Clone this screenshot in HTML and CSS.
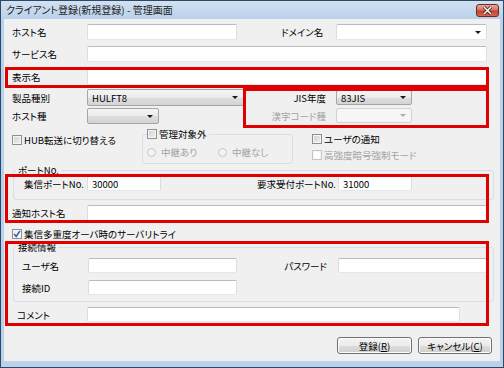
FILE: index.html
```html
<!DOCTYPE html>
<html lang="ja">
<head>
    <meta charset="UTF-8">
    <meta name="viewport" content="width=device-width, initial-scale=1.0">
    <title>クライアント登録(新規登録) - 管理画面</title>
    <link rel="stylesheet" href="styles.css">
</head>

<body>
    <div class="window">
        <div class="titlebar">
            <span class="title">クライアント登録(新規登録) - 管理画面</span>
            <span class="close">
                <svg width="11" height="9" viewBox="0 0 11 9"><path d="M2 1 L9 8 M9 1 L2 8" stroke="#3a1010" stroke-width="3"/><path d="M2 1 L9 8 M9 1 L2 8" stroke="#fff" stroke-width="1.6"/></svg>
            </span>
        </div>

        <div class="client">
            <div class="row r1">
                <span class="lbl">ホスト名</span>
                <span class="edit w150"></span>
                <span class="lbl dom">ドメイン名</span>
                <span class="combo edit-combo w151"><i class="arrow"></i></span>
            </div>
            <div class="row r2">
                <span class="lbl">サービス名</span>
                <span class="edit w400"></span>
            </div>
            <div class="row r3">
                <span class="lbl">表示名</span>
                <span class="edit w400"></span>
            </div>

            <div class="product">
                <div class="prod-left">
                    <div class="row kind"><span class="lbl">製品種別</span><span class="combo w157">HULFT8<i class="arrow"></i></span></div>
                    <div class="row host-kind"><span class="lbl">ホスト種</span><span class="combo w72"><i class="arrow"></i></span></div>
                </div>
                <div class="prod-right">
                    <div class="row jis"><span class="rlbl">JIS年度</span><span class="combo w76">83JIS<i class="arrow"></i></span></div>
                    <div class="row kanji"><span class="rlbl off">漢字コード種</span><span class="combo w76 disabled"><i class="arrow"></i></span></div>
                </div>
            </div>

            <div class="options">
                <span class="check hub"><i class="cb"></i>HUB転送に切り替える</span>
                <fieldset class="relay">
                    <legend><span class="check"><i class="cb"></i>管理対象外</span></legend>
                    <div class="radios">
                        <span class="radio off first"><i class="rb"></i>中継あり</span>
                        <span class="radio off"><i class="rb"></i>中継なし</span>
                    </div>
                </fieldset>
                <div class="notify">
                    <span class="check"><i class="cb"></i>ユーザの通知</span>
                    <span class="check off strong"><i class="cb"></i>高強度暗号強制モード</span>
                </div>
            </div>

            <fieldset class="group port">
                <legend>ポートNo.</legend>
                <div class="row port-row">
                    <span class="lbl p1">集信ポートNo.</span>
                    <span class="edit w74">30000</span>
                    <span class="lbl p2">要求受付ポートNo.</span>
                    <span class="edit w74">31000</span>
                </div>
            </fieldset>

            <div class="row notice">
                <span class="lbl">通知ホスト名</span>
                <span class="edit w400"></span>
            </div>

            <div class="row retry">
                <span class="check"><i class="cb checked"><svg width="8" height="8" viewBox="0 0 8 8"><path d="M1 4 L3.2 6.5 L7 0.8" fill="none" stroke="#2b5ea8" stroke-width="1.5"/></svg></i>集信多重度オーバ時のサーバリトライ</span>
            </div>

            <fieldset class="group conn">
                <legend>接続情報</legend>
                <div class="row conn-row">
                    <span class="lbl c1">ユーザ名</span>
                    <span class="edit w149"></span>
                    <span class="rlbl pw">パスワード</span>
                    <span class="edit w149"></span>
                </div>
                <div class="row conn-row second">
                    <span class="lbl c1">接続ID</span>
                    <span class="edit w149"></span>
                </div>
            </fieldset>

            <div class="row comment">
                <span class="lbl">コメント</span>
                <span class="edit w373"></span>
            </div>

            <div class="buttons">
                <span class="btn">登録(<u>R</u>)</span>
                <span class="btn cancel">キャンセル(<u>C</u>)</span>
            </div>
        </div>

        <div class="mark m1"></div>
        <div class="mark m2"></div>
        <div class="mark m3"></div>
        <div class="mark m4"></div>
    </div>
</body>

</html>
```

FILE: styles.css
```css
* {
    box-sizing: border-box;
}

body {
    margin: 0;
    font-family: "Noto Sans CJK JP", "Noto Sans", sans-serif;
    font-size: 9.5px;
    line-height: 12px;
    font-feature-settings: "palt";
    color: #000;
    background: #ffffff;
}

.window {
    position: relative;
    width: 504px;
    height: 368px;
    border: 1px solid #2c4a66;
    background: #b9d1ea;
    display: flex;
    flex-direction: column;
}

.titlebar {
    height: 18px;
    display: flex;
    align-items: center;
    padding: 0 4px 0 5px;
    background: linear-gradient(#d2e1f1, #b9d1ea);
    font-size: 10px;
}

.title {
    flex: 1;
    color: #1e1e1e;
}

.close {
    width: 23px;
    height: 13px;
    border: 1px solid #6b2a22;
    border-radius: 3px;
    background: linear-gradient(#eaa899, #d37461 45%, #c2432c 55%, #d06a50);
    display: flex;
    align-items: center;
    justify-content: center;
}

.client {
    margin: 0 3px;
    height: 342px;
    background: #f0f0f0;
}

/* rows */
.row {
    display: flex;
    align-items: center;
    height: 16px;
    padding-left: 8px;
}

.lbl {
    width: 75px;
    flex: none;
    white-space: nowrap;
}

.rlbl {
    flex: none;
    white-space: nowrap;
    text-align: right;
}

.r1 { margin-top: 5px; }
.r2 { margin-top: 6px; }
.r3 { margin-top: 7px; }

.dom {
    width: 55px;
    margin-left: 44px;
}

/* controls */
.edit {
    height: 100%;
    flex: none;
    display: flex;
    align-items: center;
    padding-left: 4px;
    background: #fff;
    border: 1px solid;
    border-color: #b8bbc1 #dadde3 #e4e6ea #dadde3;
    border-radius: 2px;
}

.combo {
    height: 100%;
    flex: none;
    display: flex;
    align-items: center;
    padding: 0 5px 0 4px;
    border: 1px solid #a5a5a5;
    border-radius: 2px;
    background: linear-gradient(#f5f5f5, #ebebeb 50%, #dedede 51%, #d4d4d4);
}

.combo .arrow {
    margin-left: auto;
}

.arrow {
    width: 0;
    height: 0;
    border-left: 3px solid transparent;
    border-right: 3px solid transparent;
    border-top: 3px solid #1a1a1a;
}

.edit-combo {
    background: #fff;
    border-color: #b8bbc1 #dadde3 #e4e6ea #dadde3;
}

.combo.disabled {
    background: #f6f6f6;
    border-color: #d3d3d3;
}

.combo.disabled .arrow {
    border-top-color: #aeaeae;
}

.w72 { width: 72px; }
.w74 { width: 74px; }
.w76 { width: 76px; }
.w149 { width: 149px; }
.w150 { width: 150px; }
.w151 { width: 151px; }
.w157 { width: 157px; }
.w373 { width: 373px; }
.w400 { width: 400px; }

.off {
    color: #a3a3a3;
}

/* product block */
.product {
    display: flex;
    margin-top: 4px;
}

.prod-left {
    width: 240px;
}

.kind {
    height: 17px;
}

.host-kind {
    margin-top: 2px;
}

.prod-right .row {
    height: 15px;
    padding-left: 0;
}

.prod-right .rlbl {
    width: 82px;
    margin-right: 10px;
}

.jis { margin-top: 1px; }
.kanji { margin-top: 3px; }

/* check boxes and radios */
.check,
.radio {
    display: flex;
    align-items: center;
    gap: 2px;
    height: 12px;
    white-space: nowrap;
}

.cb {
    width: 10px;
    height: 10px;
    flex: none;
    border: 1px solid #8e8f8f;
    background: linear-gradient(135deg, #cfcfcf, #f2f2f2);
    box-shadow: inset 0 0 0 1px #f6f6f6;
    display: flex;
    align-items: center;
    justify-content: center;
}

.cb.checked {
    background: linear-gradient(135deg, #e8e8e8, #ffffff);
}

.off .cb {
    border-color: #c6c6c6;
    background: #fff;
}

.rb {
    width: 9px;
    height: 9px;
    flex: none;
    border-radius: 50%;
    border: 1px solid #c6c6c6;
    background: #f3f3f3;
    margin-right: 3px;
}

.options {
    display: flex;
    align-items: flex-start;
    margin-top: 4px;
    height: 36px;
}

.hub {
    width: 130px;
    margin: 6px 0 0 8px;
}

.relay {
    width: 151px;
    height: 36px;
    margin: 0;
    padding: 0 0 0 4px;
    border: 1px solid #d5dfe5;
    border-radius: 3px;
    min-width: 0;
}

.relay legend {
    margin-left: 0;
    padding: 0 2px 0 0;
    height: 12px;
}

.radios {
    display: flex;
    margin-top: 6px;
}

.radio.first {
    width: 71px;
}

.notify {
    margin: 5px 0 0 19px;
}

.notify .strong {
    margin-top: 4px;
}

/* group boxes */
.group {
    width: 481px;
    margin: 0 0 0 9px;
    padding: 0;
    border: 1px solid #d5dfe5;
    border-radius: 3px;
    min-width: 0;
}

.group legend {
    margin-left: 2px;
    padding: 0 2px;
    height: 12px;
}

.port {
    height: 36px;
}

.port-row {
    height: 15px;
    padding-left: 10px;
}

.p1 { width: 63px; }

.p2 {
    width: 81px;
    margin-left: 96px;
}

.notice { margin-top: 5px; }

.retry {
    height: 12px;
    margin-top: 7px;
}

.conn {
    height: 61px;
    margin-top: 1px;
}

.conn-row {
    height: 15px;
    margin-top: 5px;
}

.conn-row.second {
    margin-top: 7px;
}

.c1 { width: 66px; }

.pw {
    width: 90px;
    margin-right: 11px;
}

.comment {
    height: 15px;
    margin-top: 5px;
    padding-left: 13px;
}

.comment .lbl { width: 70px; }

/* buttons */
.buttons {
    display: flex;
    justify-content: flex-end;
    gap: 6px;
    height: 17px;
    margin-top: 15px;
    padding-right: 8px;
}

.btn {
    width: 75px;
    display: flex;
    align-items: center;
    justify-content: center;
    border: 1px solid #707070;
    border-radius: 3px;
    background: linear-gradient(#f3f3f3, #ebebeb 50%, #dddddd 51%, #cfcfcf);
    box-shadow: inset 0 0 0 1px #fbfbfb;
}

.btn.cancel { width: 74px; }

/* red annotation frames */
.mark {
    position: absolute;
    border: 3px solid #e00000;
}

.m1 { left: 4px; top: 66px; width: 484px; height: 21px; }
.m2 { left: 242px; top: 87px; width: 246px; height: 40px; }
.m3 { left: 4px; top: 173px; width: 484px; height: 49px; }
.m4 { left: 4px; top: 240px; width: 484px; height: 85px; }
```
